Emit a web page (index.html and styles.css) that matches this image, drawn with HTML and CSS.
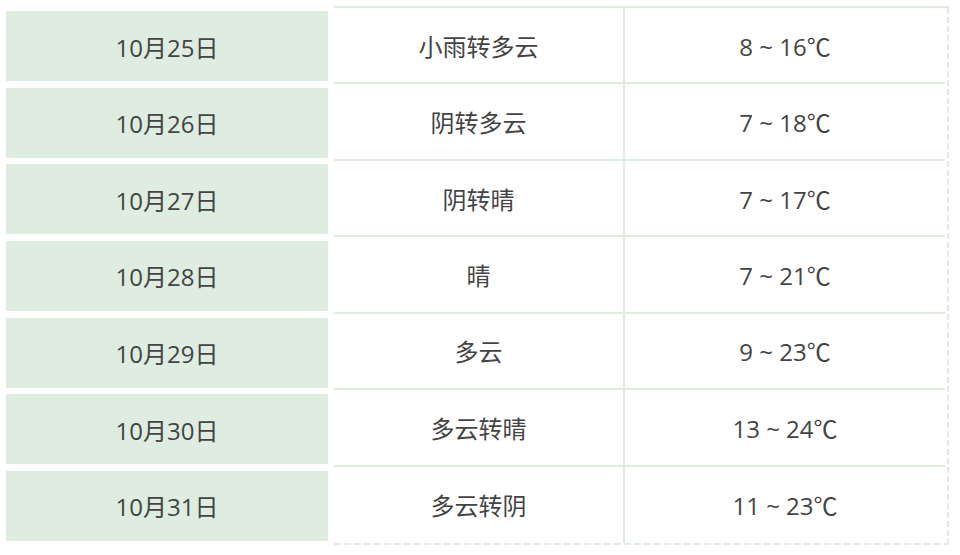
FILE: index.html
```html
<!DOCTYPE html>
<html lang="zh-CN">
<head>
<meta charset="utf-8">
<title>天气预报</title>
<link rel="stylesheet" href="styles.css">
</head>
<body>
<div class="table">
  <div class="dates">
    <div class="date">10月25日</div>
    <div class="date">10月26日</div>
    <div class="date">10月27日</div>
    <div class="date">10月28日</div>
    <div class="date">10月29日</div>
    <div class="date">10月30日</div>
    <div class="date">10月31日</div>
  </div>
  <div class="grid">
    <div class="cell wx">小雨转多云</div><div class="cell temp">8 ~ 16℃</div>
    <div class="cell wx">阴转多云</div><div class="cell temp">7 ~ 18℃</div>
    <div class="cell wx">阴转晴</div><div class="cell temp">7 ~ 17℃</div>
    <div class="cell wx">晴</div><div class="cell temp">7 ~ 21℃</div>
    <div class="cell wx">多云</div><div class="cell temp">9 ~ 23℃</div>
    <div class="cell wx">多云转晴</div><div class="cell temp">13 ~ 24℃</div>
    <div class="cell wx last">多云转阴</div><div class="cell temp last">11 ~ 23℃</div>
  </div>
</div>
</body>
</html>
```

FILE: styles.css
```css
html, body {
  margin: 0;
  padding: 0;
  background: #ffffff;
}

body {
  font-family: "Open Sans", "Noto Sans CJK SC", sans-serif;
  font-size: 24px;
  font-weight: 400;
  color: #444444;
}

.table {
  display: grid;
  grid-template-columns: 322px 615px;
  column-gap: 6px;
  padding: 6px 0 0 6px;
  width: 943px;
}

.dates {
  display: flex;
  flex-direction: column;
  justify-content: space-between;
  padding: 5px 0 4px;
  height: 530px;
}

.date {
  height: 70px;
  background: #deede0;
  display: flex;
  align-items: center;
  justify-content: center;
}

.grid {
  display: grid;
  grid-template-columns: 291px 320px;
  grid-template-rows: repeat(7, 1fr);
  height: 535px;
  border-top: 2px solid #deede0;
  padding: 0 2px 2px 0;
  background-image:
    repeating-linear-gradient(to right, #deede0 0 7px, transparent 7px 10px),
    repeating-linear-gradient(to bottom, #deede0 0 6px, transparent 6px 9px);
  background-size: 100% 2px, 2px 100%;
  background-position: left bottom, right top;
  background-repeat: no-repeat;
}

.cell {
  display: flex;
  align-items: center;
  justify-content: center;
  border-bottom: 2px solid #deede0;
}

.cell.last {
  border-bottom: none;
}

.wx {
  border-right: 2px solid #deede0;
}
```
